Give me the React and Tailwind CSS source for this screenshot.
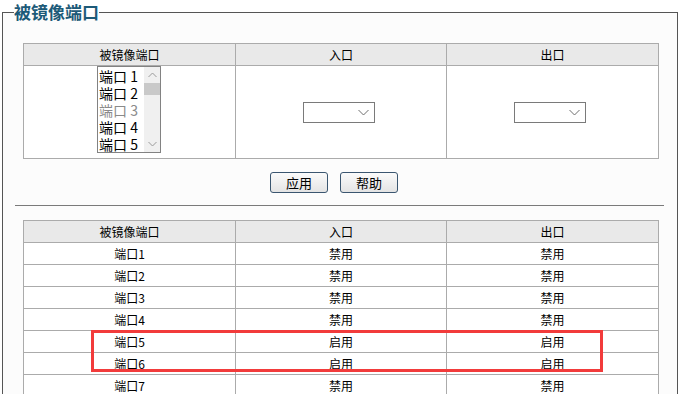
import React from "react";

const F = { fontFamily: '"Noto Sans CJK SC", "Liberation Sans", sans-serif' };

function Chevron({ up }) {
  return (
    <svg width="9" height="6" viewBox="0 0 9 6" className="block">
      <path d={up ? "M0.5 5 L4.5 1 L8.5 5" : "M0.5 1 L4.5 5 L8.5 1"} fill="none" stroke="#9a9a9a" strokeWidth="1" />
    </svg>
  );
}

function ListBox() {
  const items = ["端口 1", "端口 2", "端口 3", "端口 4", "端口 5"];
  return (
    <div className="flex h-[87px] w-[64px] border border-[#828282] bg-white">
      <div className="flex flex-1 flex-col pt-[1px]">
        {items.map((t, i) => (
          <div
            key={t}
            className={`h-[17px] pl-[1px] text-[14px] leading-[17px] whitespace-nowrap ${i === 2 ? "text-[#8a8a8a]" : "text-black"}`}
          >
            {t}
          </div>
        ))}
      </div>
      <div className="flex w-[16px] flex-col bg-[#f0f0f0]">
        <div className="flex h-[16px] items-center justify-center">
          <Chevron up />
        </div>
        <div className="h-[12px] bg-[#c9c9c9]" />
        <div className="flex-1" />
        <div className="flex h-[16px] items-center justify-center">
          <Chevron />
        </div>
      </div>
    </div>
  );
}

function Select() {
  return (
    <div className="flex h-[21px] w-[72px] items-center justify-end border border-[#7a7a7a] bg-white pr-[5px]">
      <svg width="11" height="7" viewBox="0 0 11 7">
        <path d="M0.5 1 L5.5 6 L10.5 1" fill="none" stroke="#6e6e6e" strokeWidth="1" />
      </svg>
    </div>
  );
}

function Btn({ children }) {
  return (
    <button className="h-[21px] w-[58px] rounded-[3px] border border-[#3b5670] bg-gradient-to-b from-[#fbfbfb] to-[#e4e4e4] text-[13px] leading-[19px] text-black">
      {children}
    </button>
  );
}

const th = "h-[22px] border border-[#ababab] bg-[#e9e9e9] p-0 text-center text-[12px] font-normal text-black";
const td = "h-[22px] border border-[#ababab] p-0 text-center text-[12px] text-black";

export default function App() {
  const rows = [
    ["端口1", "禁用", "禁用"],
    ["端口2", "禁用", "禁用"],
    ["端口3", "禁用", "禁用"],
    ["端口4", "禁用", "禁用"],
    ["端口5", "启用", "启用"],
    ["端口6", "启用", "启用"],
    ["端口7", "禁用", "禁用"],
    ["端口8", "禁用", "禁用"],
  ];
  return (
    <div className="relative min-h-[394px] w-[679px] bg-white" style={F}>
      <fieldset className="ml-[2px] w-[676px] border border-[#555] bg-[#fcfcfc] pb-[20px]">
        <legend className="ml-[11px] text-[17px] font-bold leading-[24px] text-[#1c5a78]">被镜像端口</legend>
        <div className="mt-[19px] ml-[20px]">
          <table className="w-[635px] table-fixed border-collapse">
            <colgroup>
              <col className="w-[212px]" />
              <col className="w-[211px]" />
              <col className="w-[212px]" />
            </colgroup>
            <thead>
              <tr>
                <th className={th}>被镜像端口</th>
                <th className={th}>入口</th>
                <th className={th}>出口</th>
              </tr>
            </thead>
            <tbody>
              <tr>
                <td className="h-[93px] border border-[#ababab] bg-white p-0 align-top">
                  <div className="flex justify-center pr-[1px]">
                    <ListBox />
                  </div>
                </td>
                <td className="border border-[#ababab] bg-white p-0">
                  <div className="flex justify-center pr-[5px]">
                    <Select />
                  </div>
                </td>
                <td className="border border-[#ababab] bg-white p-0">
                  <div className="flex justify-center pr-[5px]">
                    <Select />
                  </div>
                </td>
              </tr>
            </tbody>
          </table>
        </div>
        <div className="mt-[13px] flex justify-center gap-[12px] pr-[12px]">
          <Btn>应用</Btn>
          <Btn>帮助</Btn>
        </div>
        <div className="mt-[12px] ml-[12px] mr-[13px] h-px bg-[#7a7a7a]" />
        <div className="mt-[14px] ml-[20px]">
          <table className="w-[635px] table-fixed border-collapse">
            <colgroup>
              <col className="w-[212px]" />
              <col className="w-[211px]" />
              <col className="w-[212px]" />
            </colgroup>
            <thead>
              <tr>
                <th className={th}>被镜像端口</th>
                <th className={th}>入口</th>
                <th className={th}>出口</th>
              </tr>
            </thead>
            <tbody>
              {rows.map((r) => (
                <tr key={r[0]} className="bg-white">
                  <td className={td}>{r[0]}</td>
                  <td className={td}>{r[1]}</td>
                  <td className={td}>{r[2]}</td>
                </tr>
              ))}
            </tbody>
          </table>
        </div>
      </fieldset>
      <div className="pointer-events-none absolute left-[91px] top-[330px] h-[42px] w-[512px] border-[3px] border-[#f23b3b]" />
    </div>
  );
}
